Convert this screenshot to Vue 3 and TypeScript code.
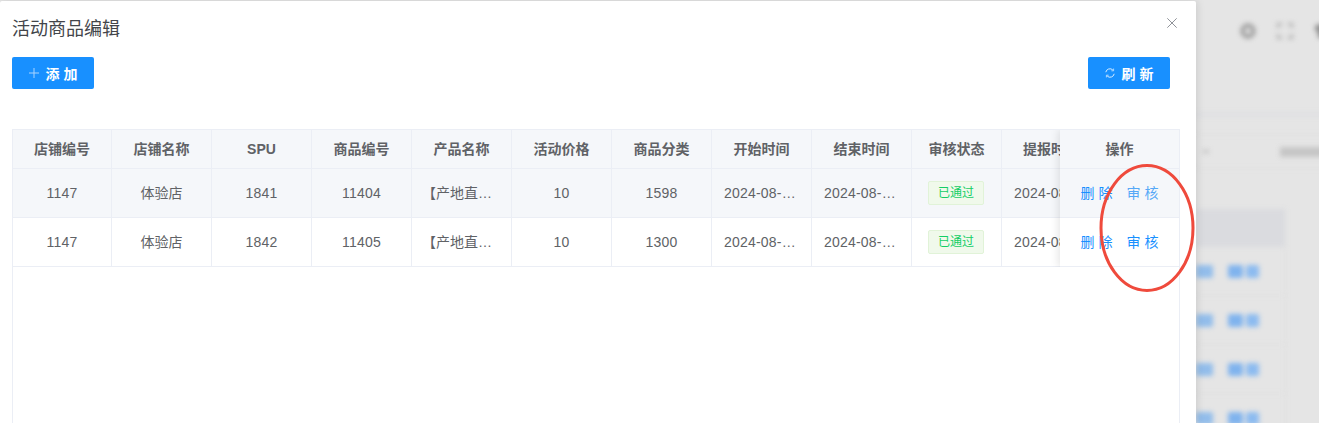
<script setup lang="ts">
interface Row {
  shop: string; name: string; spu: string; code: string; product: string;
  price: string; cat: string; start: string; end: string; status: string; report: string;
}
const columns: string[] = [
  '店铺编号', '店铺名称', 'SPU', '商品编号', '产品名称', '活动价格',
  '商品分类', '开始时间', '结束时间', '审核状态', '提报时间'
]
const rows: Row[] = [
  { shop: '1147', name: '体验店', spu: '1841', code: '11404', product: '【产地直…', price: '10', cat: '1598', start: '2024-08-…', end: '2024-08-…', status: '已通过', report: '2024-08' },
  { shop: '1147', name: '体验店', spu: '1842', code: '11405', product: '【产地直…', price: '10', cat: '1300', start: '2024-08-…', end: '2024-08-…', status: '已通过', report: '2024-08' }
]
const bgRows = [0, 1, 2, 3]
</script>

<template>
  <div class="page">
    <div class="backdrop" aria-hidden="true">
      <div class="bg-top">
        <svg class="bg-icon" viewBox="0 0 16 16" width="16" height="16">
          <circle cx="8" cy="8" r="5.5" fill="none" stroke="#989898" stroke-width="4" />
        </svg>
        <svg class="bg-icon" viewBox="0 0 16 16" width="16" height="16">
          <path d="M1 5V1h4M11 1h4v4M15 11v4h-4M5 15H1v-4" fill="none" stroke="#a8a8a8" stroke-width="2" />
        </svg>
        <svg class="bg-icon" viewBox="0 0 16 16" width="16" height="16">
          <path d="M1 3l5-2h4l5 2v5h-3v7H4V8H1z" fill="#8a8a8a" />
        </svg>
      </div>
      <div class="bg-band"></div>
      <div class="bg-filter">
        <span class="bg-chev"></span>
        <span class="bg-label"></span>
      </div>
      <div class="bg-table">
        <div class="bg-head"></div>
        <div v-for="r in bgRows" :key="r" class="bg-row">
          <span class="bg-blob first"></span>
          <span class="bg-blob second"></span>
          <span class="bg-blob third"></span>
        </div>
      </div>
    </div>

    <section class="dialog">
      <header class="dialog-head">
        <h2 class="title">活动商品编辑</h2>
        <svg class="close" viewBox="0 0 10 10" width="10" height="10">
          <path d="M.3.3l9.4 9.4M9.7.3L.3 9.7" stroke="#909399" stroke-width="1" fill="none" />
        </svg>
      </header>

      <div class="toolbar">
        <button class="btn" type="button">
          <svg viewBox="0 0 10 10" width="10" height="10">
            <path d="M5 0v10M0 5h10" stroke="#a9d4ff" stroke-width="1" fill="none" />
          </svg>
          <span>添 加</span>
        </button>
        <button class="btn" type="button">
          <svg viewBox="0 0 10 10" width="10" height="10">
            <path d="M.8 4.2A4.2 4.2 0 0 1 7.8 1.9M9.2 5.8A4.2 4.2 0 0 1 2.200 8.100" stroke="#d6ebff" stroke-width="1" fill="none" />
            <path d="M8.600 .6v2.200H6.400M1.400 9.400V7.200h2.200" stroke="#d6ebff" stroke-width=".8" fill="none" />
          </svg>
          <span>刷 新</span>
        </button>
      </div>

      <div class="table">
        <div class="grid head">
          <div v-for="c in columns" :key="c" class="cell th"><span class="nowrap">{{ c === '提报时间' ? '提报时' : c }}</span></div>
        </div>
        <div v-for="(r, i) in rows" :key="r.spu" class="grid body" :class="{ striped: i === 0 }">
          <div class="cell num">{{ r.shop }}</div>
          <div class="cell">{{ r.name }}</div>
          <div class="cell num">{{ r.spu }}</div>
          <div class="cell num">{{ r.code }}</div>
          <div class="cell start nowrap">{{ r.product }}</div>
          <div class="cell num">{{ r.price }}</div>
          <div class="cell num">{{ r.cat }}</div>
          <div class="cell num date nowrap">{{ r.start }}</div>
          <div class="cell num date nowrap">{{ r.end }}</div>
          <div class="cell"><span class="tag">{{ r.status }}</span></div>
          <div class="cell left num nowrap">{{ r.report }}</div>
        </div>

        <div class="fixed">
          <div class="fixed-cell th">操作</div>
          <div v-for="(r, i) in rows" :key="r.spu" class="fixed-cell ops" :class="{ striped: i === 0 }">
            <a class="link">删 除</a>
            <a class="link" :class="{ faded: i === 0 }">审 核</a>
          </div>
        </div>
      </div>

      <svg class="mark" viewBox="0 0 98 132" width="98" height="132">
        <ellipse cx="49" cy="66" rx="46" ry="62.500" fill="none" stroke="#ef4a3c" stroke-width="3" />
      </svg>
    </section>
  </div>
</template>

<style>
html, body { margin: 0; padding: 0; overflow: hidden; }
</style>

<style scoped>
.page {
  position: relative;
  width: 1319px;
  height: 423px;
  overflow: hidden;
  background: #e5e5e5;
  font-family: "Liberation Sans", "Noto Sans CJK SC", sans-serif;
}
.backdrop {
  position: absolute;
  top: 0;
  bottom: 0;
  left: 1196px;
  width: 140px;
  filter: blur(2.5px);
  display: flex;
  flex-direction: column;
}
.bg-top {
  height: 112px;
  flex: none;
  display: flex;
  align-items: flex-start;
  padding: 23px 0 0 44px;
  gap: 21px;
  box-sizing: border-box;
}
.bg-icon { flex: none; }
.bg-band { height: 5px; flex: none; background: #dfe0e3; }
.bg-filter {
  height: 35px;
  margin-top: 17px;
  flex: none;
  display: flex;
  align-items: center;
  padding-left: 7px;
  border-top: 1px solid #e0e0e0;
  border-bottom: 1px solid #e0e0e0;
  box-sizing: border-box;
}
.bg-chev { width: 6px; height: 3px; background: #c0c0c0; flex: none; }
.bg-label { width: 50px; height: 10px; background: #c6c6c6; margin-left: 71px; flex: none; }
.bg-table {
  margin-top: 40px;
  width: 89px;
  flex: none;
  border-right: 1px solid #e1e1e1;
}
.bg-head { height: 38px; background: #dadbdf; }
.bg-row {
  height: 49px;
  box-sizing: border-box;
  border-bottom: 1px solid #e0e0e0;
  display: flex;
  align-items: center;
}
.bg-blob { height: 13px; background: #7fb3ee; border-radius: 2px; flex: none; }
.bg-blob.first { width: 17px; background: #92bdeb; }
.bg-blob.second { width: 15px; margin-left: 15px; }
.bg-blob.third { width: 13px; margin-left: 3px; background: #8cbbf0; }

.dialog {
  position: relative;
  margin-top: 1px;
  width: 1196px;
  height: 422px;
  background: #fff;
  border-radius: 2px 2px 0 0;
  box-sizing: border-box;
  padding: 0 16px 0 12px;
  box-shadow: 1px 0 9px rgba(0, 0, 0, 0.12);
}
.dialog-head {
  height: 56px;
  display: flex;
  justify-content: space-between;
  align-items: flex-start;
}
.title {
  margin: 16px 0 0;
  font-size: 18px;
  line-height: 24px;
  font-weight: 400;
  color: #43454a;
}
.close { margin: 17px 3px 0 0; }
.toolbar {
  display: flex;
  justify-content: space-between;
  padding-right: 10px;
}
.btn {
  width: 82px;
  height: 32px;
  display: flex;
  align-items: center;
  justify-content: center;
  gap: 7px;
  padding: 0;
  border: 0;
  border-radius: 2px;
  background: #1890ff;
  color: #fff;
  font-family: inherit;
  font-size: 14px;
  font-weight: 700;
}
.table {
  position: relative;
  margin-top: 40px;
  height: 294px;
  width: 1168px;
  box-sizing: border-box;
  border: 1px solid #ebeef5;
  border-bottom: 0;
  overflow: hidden;
}
.grid {
  display: grid;
  grid-template-columns: 99px repeat(8, 100px) 90px 47px;
  width: 1047px;
  border-bottom: 1px solid #ebeef5;
  box-sizing: border-box;
}
.head { height: 39px; background: #f5f7fa; width: 1047px; }
.body { height: 49px; }
.striped { background: #f5f7fa; }
.cell {
  display: flex;
  align-items: center;
  justify-content: center;
  min-width: 0;
  padding: 0 10px;
  box-sizing: border-box;
  border-right: 1px solid #ebeef5;
  font-size: 14px;
  line-height: 23px;
  color: #606266;
}
.num { letter-spacing: 0.2px; }
.cell.start { justify-content: flex-start; }
.cell.date { justify-content: flex-start; padding-left: 12px; }
.cell.left { justify-content: flex-start; padding: 0 0 0 12px; border-right: 0; }
.th { font-weight: 700; color: #606266; font-size: 14px; }
.nowrap { white-space: nowrap; }
.head .cell:last-child { justify-content: flex-start; padding: 0 0 0 21px; border-right: 0; }
.tag {
  box-sizing: border-box;
  width: 56px;
  height: 24px;
  margin-right: 1px;
  line-height: 22px;
  text-align: center;
  font-size: 12px;
  letter-spacing: 0;
  color: #13ce66;
  background: #f0f9eb;
  border: 1px solid #e1f3d8;
  border-radius: 2px;
}
.fixed {
  position: absolute;
  top: 0;
  right: 0;
  width: 119px;
  background: #fff;
  box-shadow: -2px 0 8px rgba(0, 0, 0, 0.1);
  clip-path: inset(0 0 0 -12px);
}
.fixed-cell {
  display: flex;
  align-items: center;
  justify-content: center;
  height: 49px;
  box-sizing: border-box;
  border-bottom: 1px solid #ebeef5;
  font-size: 14px;
  line-height: 23px;
  color: #606266;
}
.fixed-cell.th { height: 39px; background: #f5f7fa; }
.ops { gap: 14px; background: #fff; }
.ops.striped { background: #f5f7fa; }
.link { color: #1890ff; font-size: 14px; white-space: nowrap; }
.link.faded { color: #55a8f7; }
.mark {
  position: absolute;
  left: 1098px;
  top: 161px;
}
</style>
